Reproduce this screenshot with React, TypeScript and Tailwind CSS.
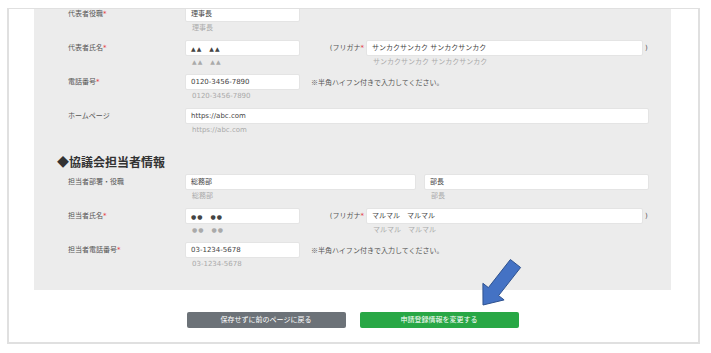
import React from 'react';

const Req = () => <span className="text-[#e4393c]">*</span>;

const Field: React.FC<{ value: React.ReactNode; width: string; hint?: React.ReactNode }> = ({ value, width, hint }) => (
  <div className={width}>
    <div className="h-[16px] bg-white border border-[#e4e4e4] rounded-[2px] px-[5px] flex items-center text-[7px] text-[#444] whitespace-nowrap">
      {value}
    </div>
    <div className="pl-[7px] mt-[1px] leading-[10px] text-[7px] text-[#aaa] whitespace-nowrap">
      {hint ?? value}
    </div>
  </div>
);

// small glyphs (▲ / ●) drawn smaller but keeping the full-width spacing
const Marks: React.FC<{ ch: string }> = ({ ch }) => (
  <span className="text-[6px] tracking-[1px]">
    {ch}
    {ch}
    <span className="inline-block w-[7px]" />
    {ch}
    {ch}
  </span>
);

const Label: React.FC<{ text: string; required?: boolean }> = ({ text, required }) => (
  <div className="w-[117px] h-[16px] flex items-center text-[7px] text-[#555] whitespace-nowrap">
    {text}
    {required && <Req />}
  </div>
);

const Row: React.FC<{ children: React.ReactNode }> = ({ children }) => (
  <div className="flex h-[34px] pl-[34px]">{children}</div>
);

const Furigana: React.FC<{ value: string }> = ({ value }) => (
  <>
    <div className="w-[66px] h-[16px] flex items-center justify-end pr-[2px] text-[7px] text-[#555] whitespace-nowrap">
      (フリガナ<Req />
    </div>
    <Field value={value} width="w-[277px]" />
    <div className="h-[16px] flex items-center ml-[2px] text-[7px] text-[#555]">)</div>
  </>
);

const Note = () => (
  <div className="h-[16px] flex items-center ml-[11px] text-[7px] text-[#555] whitespace-nowrap font-['Noto_Sans_CJK_JP',sans-serif]">
    ※半角ハイフン付きで入力してください。
  </div>
);

export default function App() {
  return (
    <div className="relative w-[711px] h-[353px] bg-white pl-[7px] pt-[8px] font-['DejaVu_Sans','Noto_Sans_CJK_JP',sans-serif]">
      <div className="w-[693px] h-[336px] border-2 border-t border-[#e0e0e0] overflow-hidden">
        <div className="-mt-[3px] ml-[25px] mr-[27px] bg-[#ececec] pb-[14px]">
          <Row>
            <Label text="代表者役職" required />
            <Field value="理事長" width="w-[115px]" />
          </Row>
          <Row>
            <Label text="代表者氏名" required />
            <Field value={<Marks ch="▲" />} width="w-[115px]" />
            <Furigana value="サンカクサンカク サンカクサンカク" />
          </Row>
          <Row>
            <Label text="電話番号" required />
            <Field value="0120-3456-7890" width="w-[115px]" />
            <Note />
          </Row>
          <Row>
            <Label text="ホームページ" />
            <Field value="https://abc.com" width="w-[464px]" />
          </Row>

          <div className="h-[32px] pt-[12px] pl-[23px] leading-[16px] text-[12px] font-bold text-[#333] whitespace-nowrap font-['Noto_Sans_CJK_JP',sans-serif]">
            ◆協議会担当者情報
          </div>

          <Row>
            <Label text="担当者部署・役職" />
            <Field value="総務部" width="w-[231px]" />
            <div className="w-[8px]" />
            <Field value="部長" width="w-[225px]" />
          </Row>
          <Row>
            <Label text="担当者氏名" required />
            <Field value={<Marks ch="●" />} width="w-[115px]" />
            <Furigana value="マルマル　マルマル" />
          </Row>
          <Row>
            <Label text="担当者電話番号" required />
            <Field value="03-1234-5678" width="w-[115px]" />
            <Note />
          </Row>
        </div>

        <div className="ml-[25px] mr-[27px] mt-[22px] flex justify-center gap-[14px]">
          <button className="w-[159px] h-[16px] rounded-[2px] bg-[#6c7278] text-white text-[7px] flex items-center justify-center">
            保存せずに前のページに戻る
          </button>
          <button className="w-[159px] h-[16px] rounded-[2px] bg-[#28a745] text-white text-[7px] flex items-center justify-center">
            申請登録情報を変更する
          </button>
        </div>
      </div>

      <svg className="absolute left-[470px] top-[250px]" width="60" height="65" viewBox="0 0 60 65">
        <polygon
          points="40.4,9.5 50.6,17.5 28.6,45.6 34.1,49.9 13,55 12.9,33.3 18.4,37.6"
          fill="#4472c4"
          stroke="#2f528f"
          strokeWidth="1"
          strokeLinejoin="miter"
        />
      </svg>
    </div>
  );
}
